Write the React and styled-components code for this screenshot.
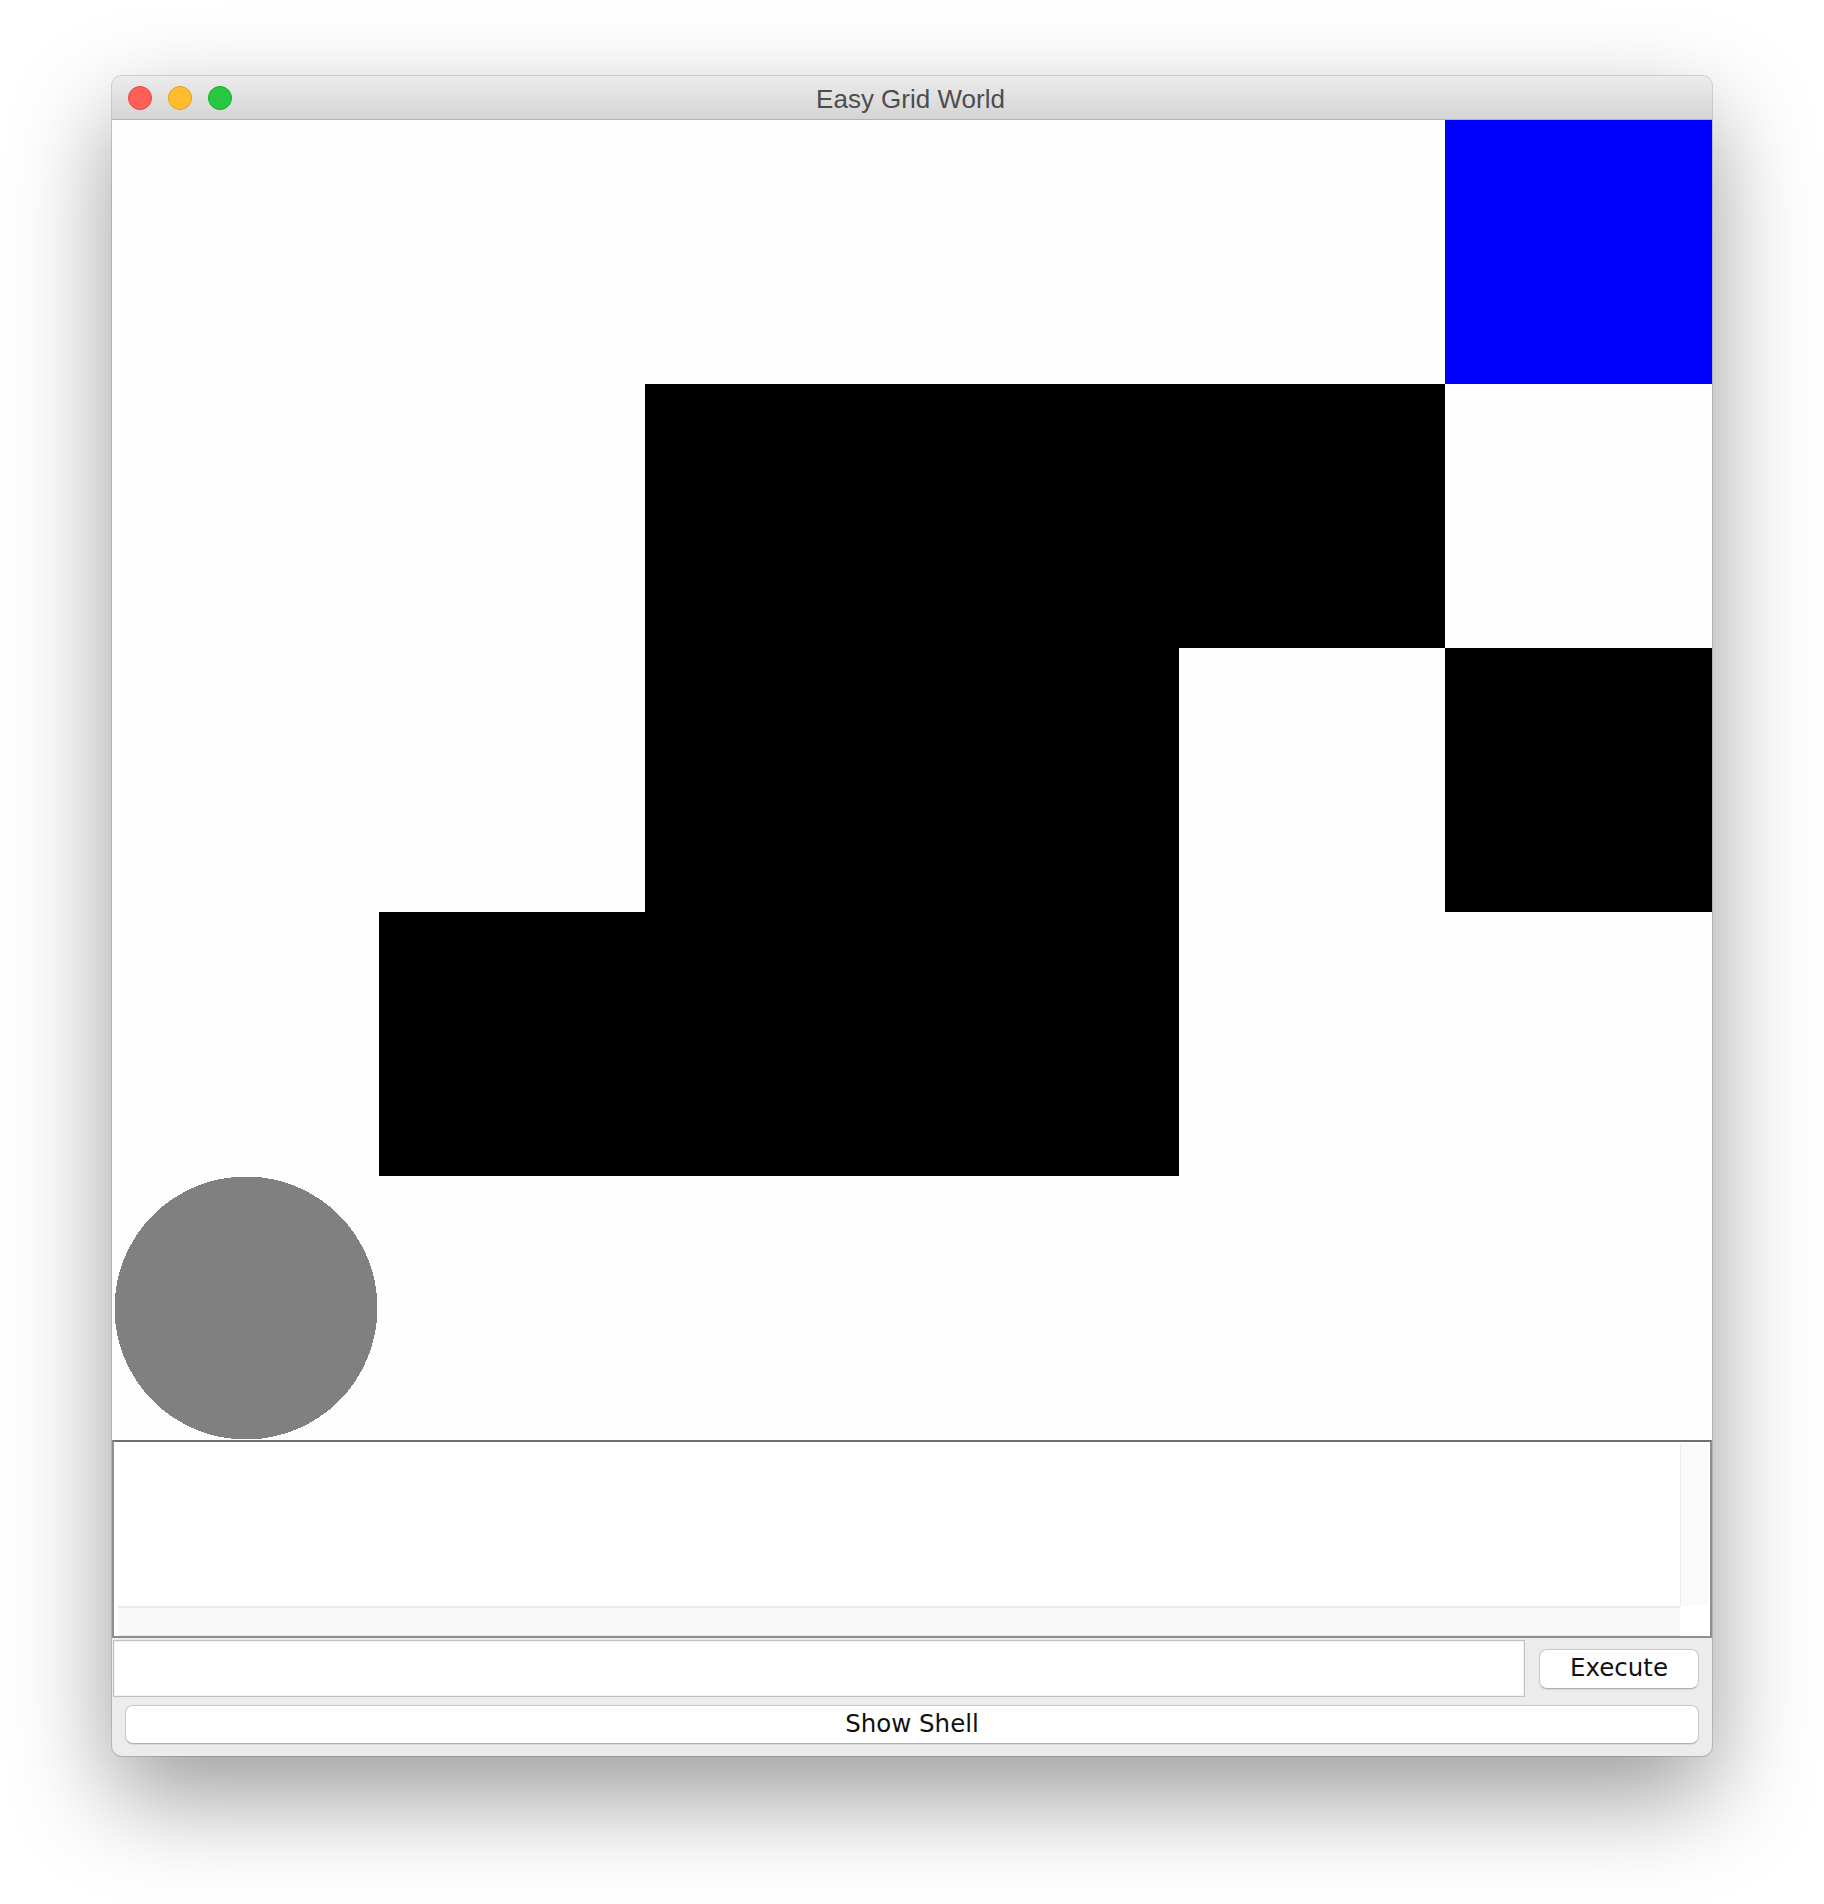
import React from "react";
import styled, { createGlobalStyle } from "styled-components";

const Global = createGlobalStyle`
  html, body { margin: 0; padding: 0; background: #ffffff; }
  body { font-family: "Liberation Sans", Arial, sans-serif; }
`;

const Page = styled.div`
  width: 1824px;
  height: 1904px;
  box-sizing: border-box;
  padding: 76px 112px 0 112px;
  background: #ffffff;
`;

const Window = styled.div`
  width: 1600px;
  display: flex;
  flex-direction: column;
  border-radius: 10px;
  overflow: hidden;
  background: #ececec;
  box-shadow: 0 0 0 1px rgba(0, 0, 0, 0.14), 0 40px 100px rgba(0, 0, 0, 0.4);
`;

const TitleBar = styled.div`
  height: 43px;
  border-bottom: 1px solid #b3b3b3;
  background: linear-gradient(#ececec, #d4d4d4);
  display: grid;
  grid-template-columns: 1fr auto 1fr;
  align-items: center;
`;

const Lights = styled.div`
  display: flex;
  gap: 16px;
  padding-left: 16px;
  padding-top: 1px;
`;

const Light = styled.span`
  width: 24px;
  height: 24px;
  box-sizing: border-box;
  border-radius: 50%;
  background: ${(p) => p.$bg};
  border: 1px solid ${(p) => p.$bd};
`;

const Title = styled.div`
  font-family: "Liberation Sans", Arial, sans-serif;
  font-size: 26px;
  color: #4d4d4d;
  line-height: 1;
  padding-top: 2px;
  margin-left: -3px;
`;

const Grid = styled.div`
  display: grid;
  grid-template-columns: repeat(6, 1fr);
  grid-template-rows: repeat(5, 264px);
  background: #fefefe;
`;

const Cell = styled.div`
  background: ${(p) => p.$color};
  display: flex;
  align-items: center;
  justify-content: center;
`;

const ShellPane = styled.div`
  height: 194px;
  border: 2px solid #8f8f8f;
  border-top-color: #6f6f6f;
  background: #ffffff;
  display: grid;
  grid-template-columns: 1fr 30px;
  grid-template-rows: 1fr 30px;
`;

const TextArea = styled.div`
  background: #ffffff;
`;

const VScroll = styled.div`
  background: #fafafa;
  border-left: 1px solid #ececec;
  margin: 2px 2px 0 0;
`;

const HScroll = styled.div`
  background: #f9f9f9;
  border-top: 2px solid #e9e9e9;
  border-bottom: 1px solid #ededed;
  margin-left: 4px;
`;

const Corner = styled.div`
  background: #ffffff;
`;

const InputRow = styled.div`
  display: flex;
  align-items: center;
  padding-top: 2px;
`;

const Input = styled.div`
  flex: 1;
  height: 57px;
  box-sizing: border-box;
  margin-left: 1px;
  border: 1px solid #c0c0c0;
  box-shadow: inset 0 0 0 1px #f2f2f2;
  background: #ffffff;
`;

const Button = styled.button`
  font-family: "DejaVu Sans", "Liberation Sans", Arial, sans-serif;
  font-size: 24.5px;
  color: #111111;
  background: #ffffff;
  border: 1px solid #c9c9c9;
  border-bottom-color: #b0b0b0;
  border-radius: 8px;
  box-shadow: 0 1px 1px rgba(0, 0, 0, 0.08);
  padding: 0;
  margin: 0;
  line-height: 1;
  display: flex;
  align-items: center;
  justify-content: center;
  box-sizing: border-box;
`;

const ExecuteButton = styled(Button)`
  width: 160px;
  height: 40px;
  margin: 0 13px 0 14px;
`;

const ShellRow = styled.div`
  padding: 8px 13px 12px 13px;
`;

const WideButton = styled(Button)`
  width: 100%;
  height: 39px;
`;

const W = "transparent";
const K = "#000000";
const B = "#0000ff";
const C = "circle";

const layout = [
  [W, W, W, W, W, B],
  [W, W, K, K, K, W],
  [W, W, K, K, W, K],
  [W, K, K, K, W, W],
  [C, W, W, W, W, W],
];

function Agent() {
  return (
    <svg width="266" height="264" viewBox="0 0 266 264" shapeRendering="crispEdges">
      <circle cx="134" cy="132" r="131.5" fill="#808080" />
    </svg>
  );
}

export default function App() {
  return (
    <>
      <Global />
      <Page>
        <Window>
          <TitleBar>
            <Lights>
              <Light $bg="#ff5f57" $bd="#e2463f" />
              <Light $bg="#ffbd2e" $bd="#e1a116" />
              <Light $bg="#28c940" $bd="#12ac28" />
            </Lights>
            <Title>Easy Grid World</Title>
            <div />
          </TitleBar>
          <Grid>
            {layout.flatMap((row, r) =>
              row.map((c, i) =>
                c === C ? (
                  <Cell key={`${r}-${i}`} $color="transparent">
                    <Agent />
                  </Cell>
                ) : (
                  <Cell key={`${r}-${i}`} $color={c} />
                )
              )
            )}
          </Grid>
          <ShellPane>
            <TextArea />
            <VScroll />
            <HScroll />
            <Corner />
          </ShellPane>
          <InputRow>
            <Input />
            <ExecuteButton>Execute</ExecuteButton>
          </InputRow>
          <ShellRow>
            <WideButton>Show Shell</WideButton>
          </ShellRow>
        </Window>
      </Page>
    </>
  );
}
